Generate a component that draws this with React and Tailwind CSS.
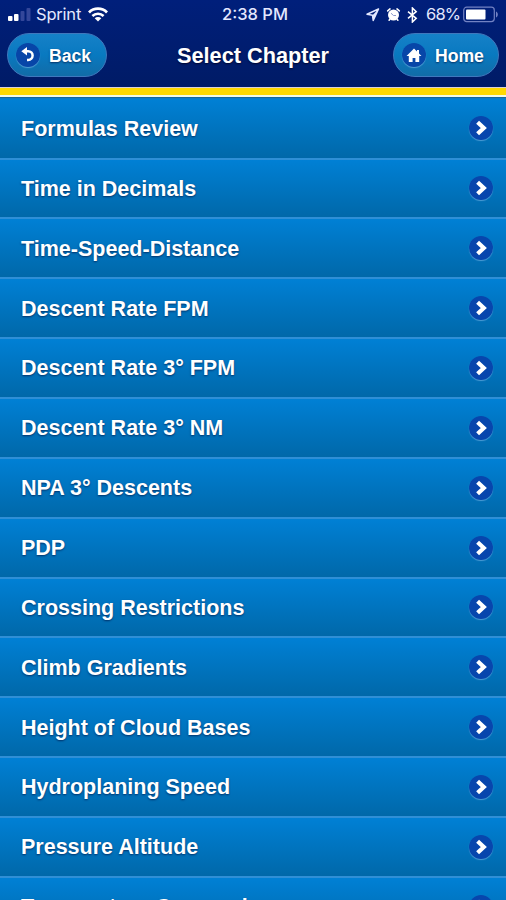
import React from "react";

const chapters = [
  "Formulas Review",
  "Time in Decimals",
  "Time-Speed-Distance",
  "Descent Rate FPM",
  "Descent Rate 3° FPM",
  "Descent Rate 3° NM",
  "NPA 3° Descents",
  "PDP",
  "Crossing Restrictions",
  "Climb Gradients",
  "Height of Cloud Bases",
  "Hydroplaning Speed",
  "Pressure Altitude",
  "Temperature Conversion",
];

function StatusBar() {
  return (
    <div className="grid grid-cols-[1fr_auto_1fr] items-center h-[29px] pl-2 pr-[6px] text-[#e4e8ff] font-['Inter','Liberation_Sans',sans-serif]">
      <div className="flex items-center">
        <svg width="24" height="14" viewBox="0 0 24 14" className="shrink-0">
          <rect x="0" y="8" width="4.5" height="5" rx="1" fill="#fff" />
          <rect x="6" y="6" width="4.5" height="7" rx="1" fill="#fff" />
          <rect x="12.5" y="3" width="4" height="10" rx="1" fill="#33479a" />
          <rect x="18.5" y="0" width="4" height="13" rx="1" fill="#33479a" />
        </svg>
        <span className="ml-[4px] w-[45px] text-[16.5px] whitespace-nowrap tracking-[-0.2px]">Sprint</span>
        <svg width="20" height="15" viewBox="0 0 20 15" className="ml-[7px] shrink-0" fill="none" stroke="#fff">
          <path d="M1 5.4a12.8 12.8 0 0 1 18 0" strokeWidth="2.8" />
          <path d="M4.4 9a8 8 0 0 1 11.2 0" strokeWidth="2.6" />
          <path d="M10 14.6 6.7 11.3a4.7 4.7 0 0 1 6.6 0z" fill="#fff" stroke="none" />
        </svg>
      </div>
      <span className="pl-[2px] font-medium text-[16.5px] whitespace-nowrap">2:38 PM</span>
      <div className="flex items-center justify-end">
        <svg width="14" height="14" viewBox="0 0 14 14" className="shrink-0">
          <path d="M12.5 1 1 6.3l5.5.9.7 5.3z" fill="none" stroke="#e4e8ff" strokeWidth="1.5" strokeLinejoin="round" />
          <path d="M12.5 1 6.5 7.2l.7 5.3z" fill="#e4e8ff" />
        </svg>
        <svg width="15" height="15" viewBox="0 0 15 15" className="ml-[6px] shrink-0">
          <circle cx="7.5" cy="8" r="5.5" fill="#fff" />
          <path d="M1.7 3.9 4 1.9M13.3 3.9 11 1.9M3.9 12.2l-.8 1M11.1 12.2l.8 1" stroke="#fff" strokeWidth="1.6" strokeLinecap="round" />
          <path d="M5 6.2l2.5 2.3H10" fill="none" stroke="#8c99ce" strokeWidth="1" />
        </svg>
        <svg width="11" height="16" viewBox="0 0 11 16" className="ml-[6px] shrink-0">
          <path d="M1 4.7l8.2 6.6L5.4 15V1l3.8 3.7L1 11.3" fill="none" stroke="#fff" strokeWidth="1.5" />
        </svg>
        <span className="ml-[8px] w-[34px] text-[16.5px] whitespace-nowrap tracking-[-0.8px]">68%</span>
        <svg width="37" height="17" viewBox="0 0 37 17" className="ml-[3px] shrink-0">
          <rect x=".7" y="1.2" width="30.6" height="14.4" rx="3" fill="none" stroke="#7282c3" strokeWidth="1.2" />
          <rect x="3" y="3.5" width="19.5" height="10" rx="1" fill="#fff" />
          <path d="M33 5.5v6c2.4-.8 2.4-5.2 0-6z" fill="#7282c3" />
        </svg>
      </div>
    </div>
  );
}

function HeaderButton({ label, children, className }) {
  return (
    <button
      className={`flex items-center h-[44px] rounded-full border border-[#3f78bd] bg-gradient-to-b from-[#1581c8] via-[#0879c0] to-[#116ca7] text-white font-bold text-[17.6px] leading-none [text-shadow:0_1px_2px_rgba(0,30,80,0.8)] ${className}`}
    >
      <span className="flex items-center justify-center size-[24px] rounded-full bg-[#0746a8] shadow-[0_1px_1px_rgba(130,190,235,0.6)]">
        {children}
      </span>
      <span className="pt-[4px]">{label}</span>
    </button>
  );
}

function ChapterRow({ title }) {
  return (
    <li className="flex items-center justify-between shrink-0 h-[59.86px] pl-[21px] pr-[13px] border-t-2 border-[#2f8fd6] bg-gradient-to-b from-[#0080d5] to-[#0068a9] first:h-[59.5px] first:border-t first:border-[#0b7cc4]">
      <span className="pt-[1px] text-[21.5px] font-bold text-white whitespace-nowrap [text-shadow:0_1px_2px_rgba(0,30,80,0.75)]">
        {title}
      </span>
      <span className="flex items-center justify-center size-[24px] rounded-full bg-[#0746ad] shadow-[0_1px_1px_rgba(110,175,225,0.7)]">
        <svg width="14" height="16" viewBox="0 0 14 16">
          <path d="M3.6 2.2 9.8 8 3.6 13.8" fill="none" stroke="#fff" strokeWidth="4.2" />
        </svg>
      </span>
    </li>
  );
}

export default function App() {
  return (
    <div className="flex flex-col w-[506px] h-[900px] overflow-hidden bg-[#0068a9] font-['Liberation_Sans',Arial,sans-serif]">
      <header className="shrink-0 h-[87px] bg-gradient-to-b from-[#001f7b] to-[#001b66]">
        <StatusBar />
        <div className="grid grid-cols-[1fr_auto_1fr] items-center h-[52px] px-[7px]">
          <HeaderButton label="Back" className="w-[100px] pl-[8px] gap-[9px]">
            <svg width="14" height="16" viewBox="0 0 14 16">
              <path d="M6 0v8.5L.3 4.2z" fill="#fff" />
              <path d="M4 4.2h3.2a4.4 4.4 0 0 1 0 8.8H6" fill="none" stroke="#fff" strokeWidth="2.5" />
            </svg>
          </HeaderButton>
          <h1 className="pt-[2px] text-[21.7px] font-bold text-white whitespace-nowrap [text-shadow:0_1px_2px_rgba(0,0,30,0.8)]">Select Chapter</h1>
          <HeaderButton label="Home" className="w-[106px] pl-[8px] gap-[9px] justify-self-end">
            <svg width="16" height="15" viewBox="0 0 16 15">
              <path d="M8 .5.5 8h2.3v6h3.8v-4h2.8v4h3.800V8h2.300L13 5.500V2h-2v1.500z" fill="#fff" />
            </svg>
          </HeaderButton>
        </div>
      </header>
      <div className="shrink-0 h-[11px] border-t border-[#d8d0d8] bg-[#ffd900] flex flex-col justify-end">
        <div className="h-[2px] bg-[#f0fbe9]" />
        <div className="h-px bg-[#17679b]" />
      </div>
      <ul className="flex flex-col">
        {chapters.map((title) => (
          <ChapterRow key={title} title={title} />
        ))}
      </ul>
    </div>
  );
}
